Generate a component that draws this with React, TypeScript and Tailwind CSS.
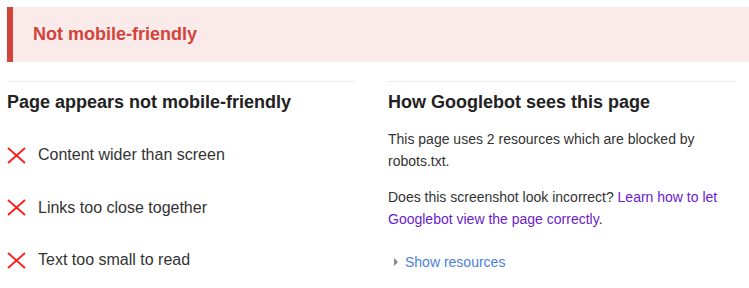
import React from "react";

const Cross = () => (
  <svg width="19" height="17" viewBox="0 0 19 17" className="shrink-0">
    <path d="M1 1L18 16M18 1L1 16" stroke="#ff1a1a" strokeWidth="1.8" fill="none" />
  </svg>
);

const issues = ["Content wider than screen", "Links too close together", "Text too small to read"];

export default function App() {
  return (
    <div className="w-[749px] h-[288px] bg-white font-['Liberation_Sans',Arial,sans-serif] text-[#333] overflow-hidden">
      {/* Banner */}
      <div className="mt-[7px] ml-[7px] h-[55px] bg-[#faeaea] border-l-[6px] border-[#d2443a] flex items-center pl-[20px]">
        <h1 className="text-[18px] font-bold text-[#d2443a]">Not mobile-friendly</h1>
      </div>

      <div className="grid grid-cols-2 gap-[33px] pl-[7px] pr-[13px] mt-[19px]">
        {/* Left */}
        <div className="border-t border-[#ebebeb] pt-[8px]">
          <h2 className="text-[18px] leading-[24px] font-bold text-[#222]">Page appears not mobile-friendly</h2>
          <ul className="mt-[15px]">
            {issues.map((t) => (
              <li key={t} className="h-[52.5px] flex items-center">
                <Cross />
                <span className="ml-[12px] text-[16px] text-[#333]">{t}</span>
              </li>
            ))}
          </ul>
        </div>

        {/* Right */}
        <div className="border-t border-[#ebebeb] pt-[8px]">
          <h2 className="text-[18px] leading-[24px] font-bold text-[#222]">How Googlebot sees this page</h2>
          <p className="mt-[14px] text-[14px] leading-[22px]">
            This page uses 2 resources which are blocked by robots.txt.
          </p>
          <p className="mt-[14px] text-[14px] leading-[22px]">
            Does this screenshot look incorrect?{" "}
            <a className="text-[#6a1ccc]">Learn how to let Googlebot view the page correctly</a>.
          </p>
          <div className="mt-[21px] h-[22px] flex items-center pl-[6px]">
            <span className="w-0 h-0 border-y-[4px] border-y-transparent border-l-[4px] border-l-[#888]" />
            <span className="ml-[7px] text-[14px] text-[#4a80dc]">Show resources</span>
          </div>
        </div>
      </div>
    </div>
  );
}
